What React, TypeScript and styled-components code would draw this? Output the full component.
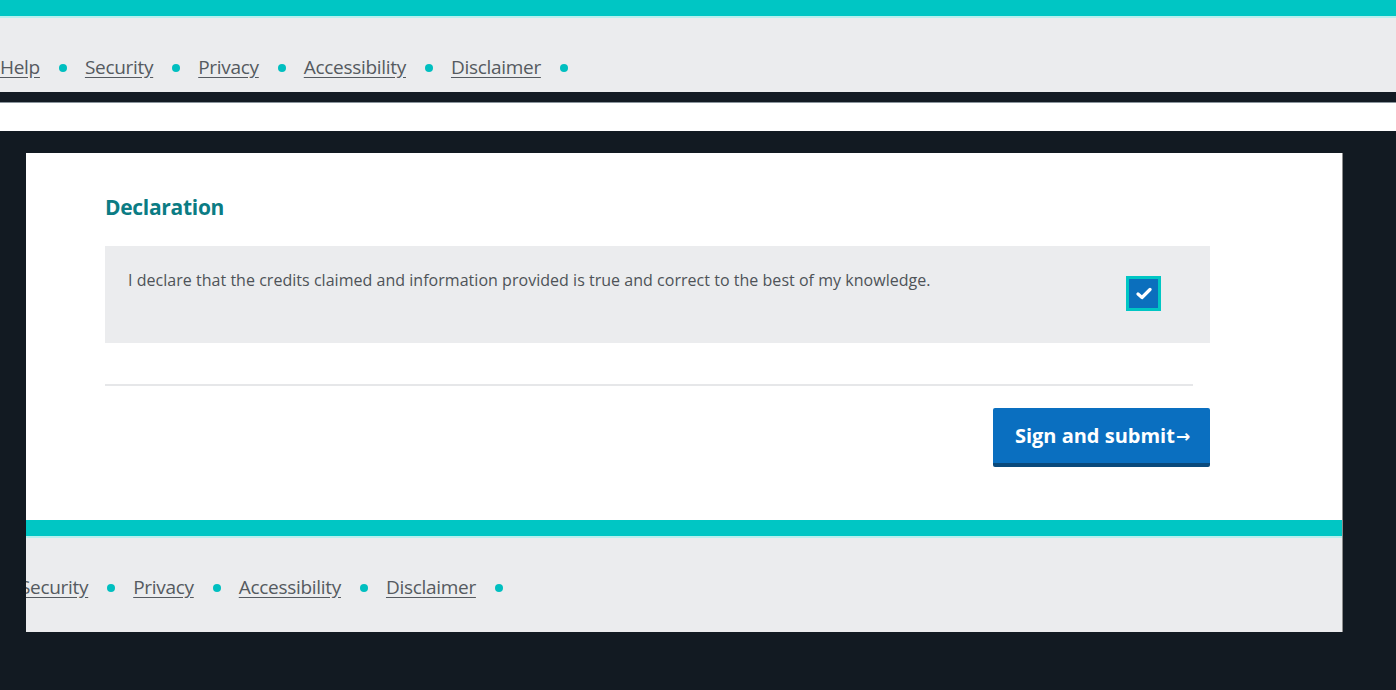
import React from 'react';
import styled, { createGlobalStyle } from 'styled-components';

const GlobalStyle = createGlobalStyle`
  html, body {
    margin: 0;
    padding: 0;
    background: #121a22;
    font-family: 'Open Sans', 'Liberation Sans', sans-serif;
  }
`;

const Page = styled.div`
  width: 1396px;
  height: 690px;
  overflow: hidden;
  background: #121a22;
`;

const FooterBand = styled.footer`
  background: #ebecee;
  border-top: 16px solid #00c6c4;
  box-shadow: inset 0 2px 0 #b8f0ee;
  overflow: hidden;
  display: flex;
  align-items: flex-start;
  box-sizing: content-box;
`;

const TopFooter = styled(FooterBand)`
  height: 76px;
  border-bottom: 10px solid #131b24;
`;

const WhiteGap = styled.div`
  height: 28px;
  background: #fff;
  border-top: 1px solid #8a949c;
`;

const Body = styled.main`
  padding: 22px 0 0 26px;
`;

const Card = styled.section`
  width: 1316px;
  background: #fff;
  border-right: 1px solid #8c8c8c;
`;

const CardInner = styled.div`
  padding: 40px 132px 53px 79px;
`;

const Heading = styled.h2`
  margin: 0 0 25px;
  font-size: 21px;
  font-weight: 700;
  color: #0b7c84;
  letter-spacing: -0.3px;
`;

const DeclareBox = styled.div`
  background: #ebecee;
  height: 97px;
  display: flex;
  justify-content: space-between;
  align-items: flex-start;
  padding: 0 49px 0 23px;
  box-sizing: border-box;
`;

const DeclareText = styled.p`
  margin: 23px 0 0;
  font-size: 16px;
  color: #4e5358;
  letter-spacing: 0.03px;
`;

const Check = styled.span`
  margin-top: 30px;
  width: 35px;
  height: 35px;
  box-sizing: border-box;
  border: 3px solid #00c6c4;
  background: #0b6fbd;
  display: flex;
  align-items: center;
  justify-content: center;
`;

const Divider = styled.hr`
  margin: 41px 17px 0 0;
  border: none;
  border-top: 2px solid #e6e7e9;
`;

const Actions = styled.div`
  display: flex;
  justify-content: flex-end;
  margin-top: 22px;
`;

const SubmitButton = styled.button`
  width: 217px;
  height: 59px;
  border: none;
  border-bottom: 4px solid #0a4a7c;
  border-radius: 2px;
  background: #0a6fc0;
  color: #fff;
  font-family: 'Open Sans', 'Liberation Sans', sans-serif;
  font-size: 20px;
  font-weight: 700;
  letter-spacing: 0;
  padding: 0 0 0 2px;
  display: flex;
  align-items: center;
  justify-content: center;
`;

const Arrow = styled.span`
  font-family: 'DejaVu Sans', sans-serif;
  font-size: 17px;
  font-weight: 700;
  margin-left: 1px;
`;

const CardFooter = styled(FooterBand)`
  height: 96px;
`;

const LinkRow = styled.nav<{ $shift: number }>`
  display: flex;
  align-items: center;
  flex-shrink: 0;
  margin-top: 37px;
  margin-left: ${(p) => p.$shift}px;
`;

const FootLink = styled.a`
  font-size: 19px;
  line-height: 28px;
  color: #555a60;
  text-decoration: underline;
  text-underline-offset: 3px;
  letter-spacing: -0.3px;
  white-space: nowrap;
`;

const Dot = styled.span`
  width: 8px;
  height: 8px;
  border-radius: 50%;
  background: #00bfc0;
  margin: 2px 18px 0 19px;
  flex-shrink: 0;
`;

const links = ['Help', 'Security', 'Privacy', 'Accessibility ', 'Disclaimer'];

function FooterLinks({ shift }: { shift: number }) {
  return (
    <LinkRow $shift={shift}>
      {links.map((l) => (
        <React.Fragment key={l}>
          <FootLink href="#">{l}</FootLink>
          <Dot />
        </React.Fragment>
      ))}
    </LinkRow>
  );
}

export default function App() {
  return (
    <Page>
      <GlobalStyle />
      <TopFooter>
        <FooterLinks shift={0} />
      </TopFooter>
      <WhiteGap />
      <Body>
        <Card>
          <CardInner>
            <Heading>Declaration</Heading>
            <DeclareBox>
              <DeclareText>
                I declare that the credits claimed and information provided is true and correct to the best of my knowledge.
              </DeclareText>
              <Check>
                <svg width="16" height="13" viewBox="0 0 16 13">
                  <path d="M2 7l4 3.5L14 2.5" fill="none" stroke="#fff" strokeWidth="3.2" strokeLinecap="round" strokeLinejoin="round" />
                </svg>
              </Check>
            </DeclareBox>
            <Divider />
            <Actions>
              <SubmitButton>
                Sign and submit<Arrow>→</Arrow>
              </SubmitButton>
            </Actions>
          </CardInner>
          <CardFooter>
            <FooterLinks shift={-91} />
          </CardFooter>
        </Card>
      </Body>
    </Page>
  );
}
